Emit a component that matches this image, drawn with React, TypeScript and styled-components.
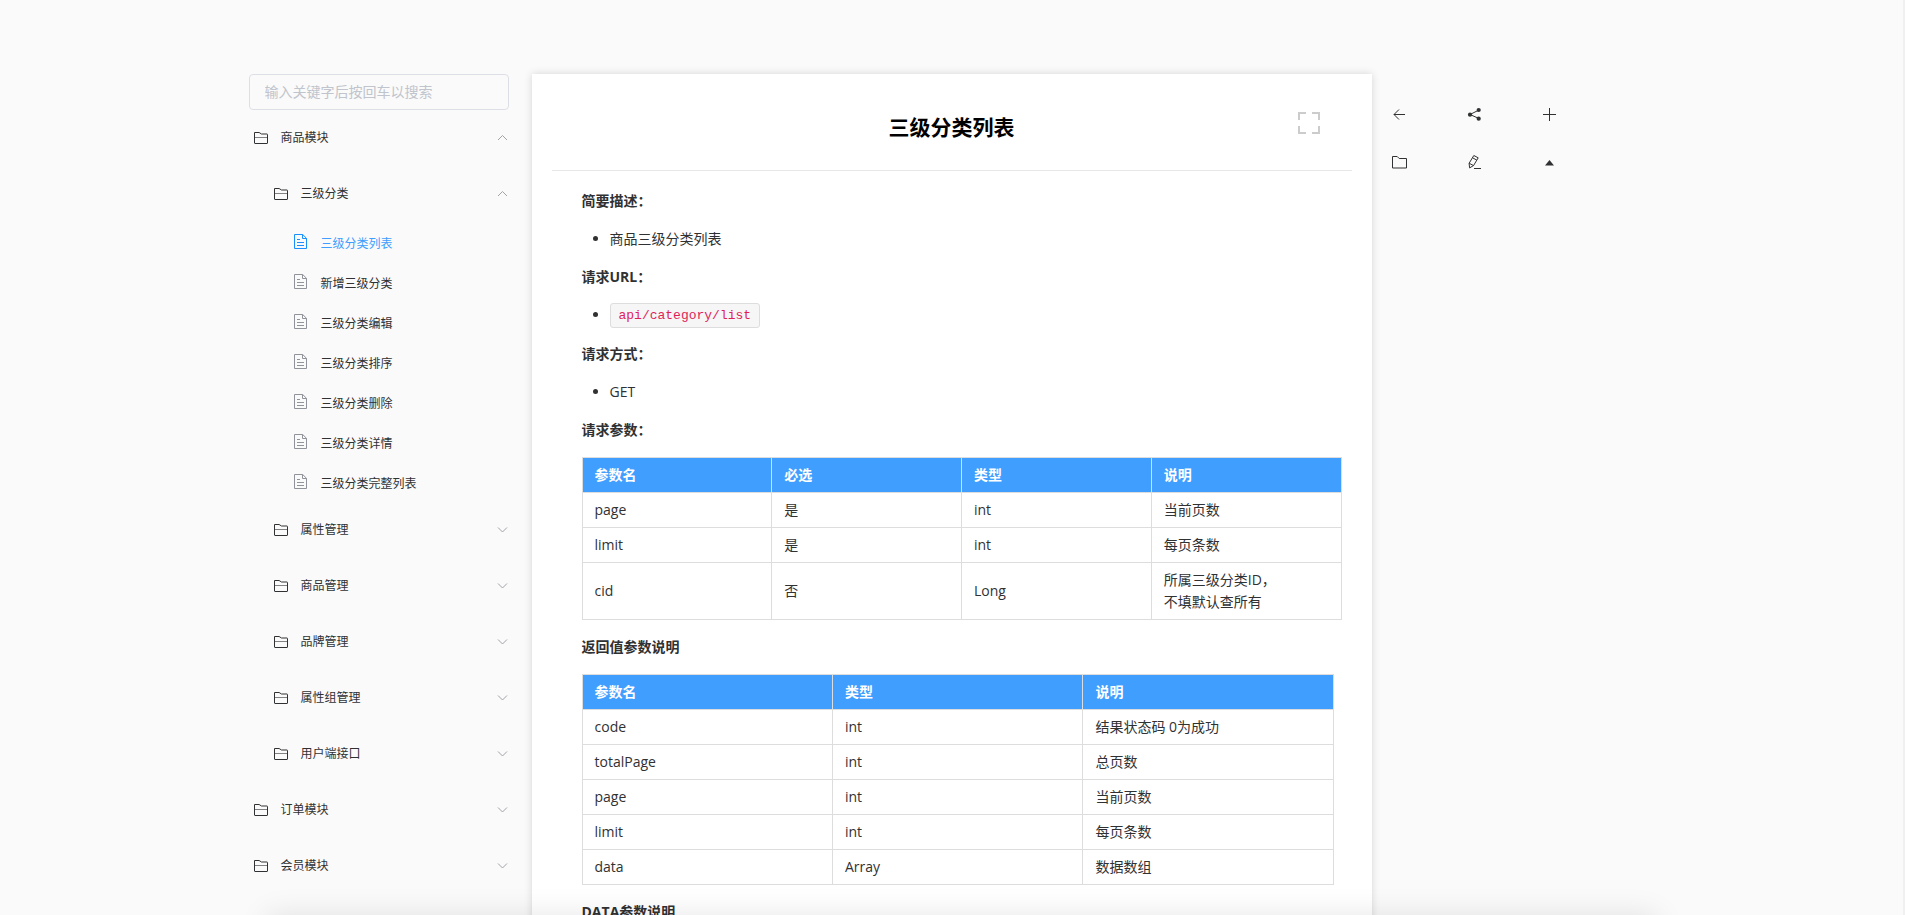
import React from "react";
import styled, { createGlobalStyle } from "styled-components";

const GlobalStyle = createGlobalStyle`
  *, *::before, *::after { box-sizing: border-box; }
  body {
    margin: 0;
    background: #fafafa;
    color: #303133;
    font-family: "Open Sans", "Noto Sans CJK SC", sans-serif;
    font-size: 14px;
    line-height: 22px;
  }
`;

const Page = styled.div`
  height: 100vh;
  overflow-y: auto;
  scrollbar-width: none;
  border-right: 2px solid #f0f0f0;
`;

const Columns = styled.div`
  display: grid;
  grid-template-columns: 1fr minmax(0, 840px) 1fr;
  min-height: 100%;
  padding-top: 74px;
`;

const Sidebar = styled.nav`
  justify-self: end;
  width: 260px;
  margin-right: 23px;
`;

const SearchInput = styled.input`
  display: block;
  width: 100%;
  height: 36px;
  padding: 0 15px 2px;
  border: 1px solid #dcdfe6;
  border-radius: 4px;
  background: transparent;
  font: inherit;
  outline: none;
  &::placeholder { color: #c0c4cc; opacity: 1; }
`;

const Menu = styled.ul`
  margin: 0;
  padding: 0;
  list-style: none;
  font-size: 12px;
`;

const FolderButton = styled.button<{ $level: number }>`
  display: flex;
  align-items: center;
  gap: 12px;
  width: 100%;
  height: 56px;
  padding: 0 1px 0 ${(p) => 5 + p.$level * 20}px;
  border: 0;
  background: none;
  color: #303133;
  font: inherit;
  text-align: left;
  cursor: pointer;
  svg:last-child { margin-left: auto; }
`;

const PageLink = styled.a<{ $active?: boolean }>`
  display: flex;
  align-items: center;
  gap: 14px;
  height: 40px;
  padding-left: 45px;
  color: ${(p) => (p.$active ? "#409eff" : "#303133")};
  text-decoration: none;
  svg { color: ${(p) => (p.$active ? "#1890ff" : "#909399")}; }
  span { padding-top: 4px; }
`;

const Card = styled.main`
  padding: 0 20px 16px;
  background: #fff;
  box-shadow: 0 0 8px rgba(0, 0, 0, 0.15);
`;

const CardHeader = styled.header`
  display: grid;
  grid-template-columns: 1fr auto 1fr;
  align-items: center;
  height: 97px;
  padding: 9px 32px 0;
  border-bottom: 1px solid #e8e8e8;
`;

const Title = styled.h1`
  grid-column: 2;
  margin: 0;
  color: #000;
  font-size: 21px;
  line-height: 32px;
  font-weight: 700;
`;

const FullscreenButton = styled.button`
  justify-self: end;
  display: flex;
  margin-bottom: 8px;
  padding: 0;
  border: 0;
  background: none;
  color: #ccc;
  cursor: pointer;
`;

const Article = styled.article`
  padding: 19px 10px 0 30px;
`;

const Heading = styled.h2`
  margin: 0 0 16px;
  font-size: 14px;
  line-height: 22px;
  font-weight: 700;
`;

const List = styled.ul`
  margin: 0 0 16px;
  padding-left: 28px;
`;

const Code = styled.code`
  display: inline-block;
  margin: -1px 0;
  padding: 0 8px;
  border: 1px solid #ddd;
  border-radius: 3px;
  background: #f6f6f6;
  color: #e01e5a;
  font-family: Consolas, "Liberation Mono", monospace;
  font-size: 13px;
  line-height: 23px;
  vertical-align: top;
`;

const DataTable = styled.table<{ $width: string }>`
  width: ${(p) => p.$width};
  margin: 0 0 16px;
  border-collapse: collapse;
  table-layout: fixed;
  th, td {
    padding: 6px 12px;
    border: 1px solid #ddd;
    text-align: left;
    vertical-align: middle;
    white-space: pre-line;
  }
  th { background: #409eff; color: #fff; font-weight: 700; }
`;

const Tools = styled.aside`
  display: grid;
  grid-template-columns: repeat(3, 75px);
  grid-auto-rows: 48px;
  align-content: start;
  padding: 16px 0 0 19px;
`;

const ToolButton = styled.button`
  display: flex;
  align-items: center;
  justify-content: flex-start;
  padding: 0;
  border: 0;
  background: none;
  color: #303133;
  cursor: pointer;
`;

const BottomShade = styled.div`
  position: fixed;
  top: 100vh;
  left: 14%;
  right: 13%;
  height: 60px;
  box-shadow: 0 0 30px rgba(0, 0, 0, 0.1);
`;

const FolderOpenIcon = () => (
  <svg width="15" height="14" viewBox="0 0 15 14" fill="none" stroke="currentColor" aria-hidden="true">
    <path d="M.5 12V1.5h4.6l2.4 1.5h5.5q.5 0 .5.5V12q0 .5-.5.5H1q-.5 0-.5-.5z" />
    <path d="M.5 6.5h13" strokeOpacity=".6" />
  </svg>
);

const DocumentIcon = () => (
  <svg width="13" height="16" viewBox="0 0 13 16" fill="none" stroke="currentColor" aria-hidden="true">
    <path d="M.5.5h8.2l3.8 3.8v10.2H.5z" />
    <path d="M8.5.5v4h4" />
    <path d="M3 5.5h3M3 8.5h7M3 11.5h7" />
  </svg>
);

const Chevron = ({ open }: { open?: boolean }) => (
  <svg width="11" height="8" viewBox="0 0 11 8" fill="none" stroke="#a0a3a8" aria-hidden="true">
    <path d={open ? "M1 6l4.5-4.5L10 6" : "M1 1.5L5.5 6 10 1.5"} />
  </svg>
);

const FullscreenIcon = () => (
  <svg width="22" height="22" viewBox="0 0 22 22" fill="none" stroke="currentColor" strokeWidth="2" aria-hidden="true">
    <path d="M1 8V1h7M14 1h7v7M21 14v7h-7M8 21H1v-7" />
  </svg>
);

const toolIcons: [string, React.ReactNode][] = [
  ["返回", <path key="a" d="M14 8.5H3M8 3.5l-5 5 5 5" stroke="currentColor" />],
  [
    "分享",
    <g key="b">
      <path d="M13 4L4 8.5l9 4" stroke="currentColor" />
      <circle cx="12.7" cy="4" r="2.1" fill="currentColor" />
      <circle cx="4" cy="8.7" r="2.1" fill="currentColor" />
      <circle cx="12.7" cy="12.7" r="2.1" fill="currentColor" />
    </g>,
  ],
  ["新建", <path key="c" d="M8.5 2v13M2 8.5h13" stroke="currentColor" />],
  ["目录", <path key="d" d="M1.5 2.5h4.7l2 2h7.3v9.5h-14z" stroke="currentColor" />],
  [
    "编辑",
    <path key="e" d="M7.8 1.5l4.4 2.3L7.6 11.5l-4 2.4-.5-4.6zM6.6 3.8l4.3 2.4M3.2 9.3l4.4 2.3M8 14.5h7" stroke="currentColor" />,
  ],
  ["更多", <path key="f" d="M4 11.5L8.5 6l4.5 5.5z" fill="currentColor" />],
];

const pages = [
  "三级分类列表",
  "新增三级分类",
  "三级分类编辑",
  "三级分类排序",
  "三级分类删除",
  "三级分类详情",
  "三级分类完整列表",
];

const Folder = ({ name, level = 0, open, children }: {
  name: string;
  level?: number;
  open?: boolean;
  children?: React.ReactNode;
}) => (
  <li>
    <FolderButton type="button" $level={level} aria-expanded={!!open}>
      <FolderOpenIcon />
      <span>{name}</span>
      <Chevron open={open} />
    </FolderButton>
    {children && <Menu>{children}</Menu>}
  </li>
);

const Grid = ({ width, head, rows }: { width: string; head: string[]; rows: string[][] }) => (
  <DataTable $width={width}>
    <thead>
      <tr>{head.map((h) => <th key={h} scope="col">{h}</th>)}</tr>
    </thead>
    <tbody>
      {rows.map((row) => (
        <tr key={row[0]}>{row.map((cell, i) => <td key={i}>{cell}</td>)}</tr>
      ))}
    </tbody>
  </DataTable>
);

export default function App() {
  return (
    <Page>
      <GlobalStyle />
      <Columns>
        <Sidebar>
          <SearchInput type="text" aria-label="搜索" placeholder="输入关键字后按回车以搜索" />
          <Menu>
            <Folder name="商品模块" open>
              <Folder name="三级分类" level={1} open>
                {pages.map((p, i) => (
                  <li key={p}>
                    <PageLink href="#" $active={i === 0}>
                      <DocumentIcon />
                      <span>{p}</span>
                    </PageLink>
                  </li>
                ))}
              </Folder>
              {["属性管理", "商品管理", "品牌管理", "属性组管理", "用户端接口"].map((n) => (
                <Folder key={n} name={n} level={1} />
              ))}
            </Folder>
            <Folder name="订单模块" />
            <Folder name="会员模块" />
          </Menu>
        </Sidebar>
        <Card>
          <CardHeader>
            <Title>三级分类列表</Title>
            <FullscreenButton type="button" aria-label="全屏">
              <FullscreenIcon />
            </FullscreenButton>
          </CardHeader>
          <Article>
            <Heading>{"简要描述\uFF1A"}</Heading>
            <List><li>商品三级分类列表</li></List>
            <Heading>{"请求URL\uFF1A"}</Heading>
            <List><li><Code>api/category/list</Code></li></List>
            <Heading>{"请求方式\uFF1A"}</Heading>
            <List><li>GET</li></List>
            <Heading>{"请求参数\uFF1A"}</Heading>
            <Grid
              width="100%"
              head={["参数名", "必选", "类型", "说明"]}
              rows={[
                ["page", "是", "int", "当前页数"],
                ["limit", "是", "int", "每页条数"],
                ["cid", "否", "Long", "所属三级分类ID\uFF0C\n不填默认查所有"],
              ]}
            />
            <Heading>返回值参数说明</Heading>
            <Grid
              width="99%"
              head={["参数名", "类型", "说明"]}
              rows={[
                ["code", "int", "结果状态码 0为成功"],
                ["totalPage", "int", "总页数"],
                ["page", "int", "当前页数"],
                ["limit", "int", "每页条数"],
                ["data", "Array", "数据数组"],
              ]}
            />
            <Heading>DATA参数说明</Heading>
          </Article>
        </Card>
        <Tools>
          {toolIcons.map(([label, icon]) => (
            <ToolButton key={label} type="button" aria-label={label}>
              <svg width="17" height="17" viewBox="0 0 17 17" fill="none" aria-hidden="true">{icon}</svg>
            </ToolButton>
          ))}
        </Tools>
      </Columns>
      <BottomShade />
    </Page>
  );
}
